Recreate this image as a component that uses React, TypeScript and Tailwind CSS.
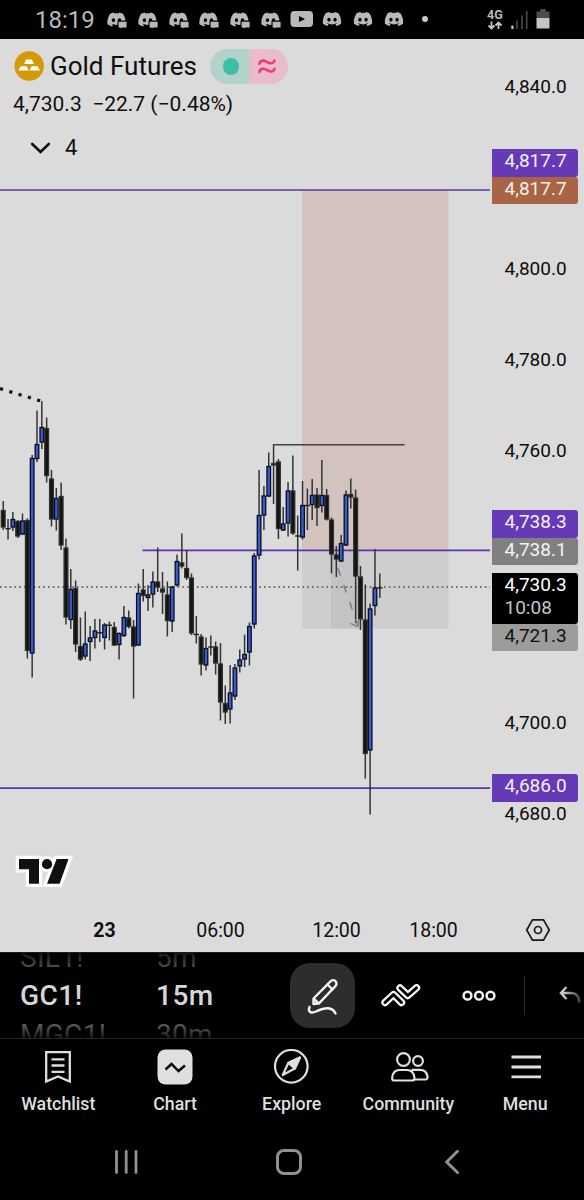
import React from "react";
import { FaDiscord } from "react-icons/fa";

type Candle = [number, number, number, number, "u" | "d"];

// high, body top, body bottom, low, direction
const candles: Candle[] = [
  [501, 510, 527.5, 530, "d"], [519, 528, 529.3, 539.5, "d"], [512, 519, 527.5, 531, "u"],
  [520, 521, 536.5, 538, "d"], [513.5, 520.5, 534.5, 535, "u"], [518.5, 520, 651, 658.5, "d"],
  [455, 458, 653.5, 677.5, "u"], [410.5, 444, 459, 462, "u"], [401, 427, 442.5, 449, "u"],
  [417.5, 428, 476, 482.5, "d"], [470, 478.5, 519.5, 526.5, "d"], [488, 498, 519.5, 530.5, "u"],
  [482.5, 496, 545.5, 550, "d"], [538.5, 547.5, 617.5, 624.5, "d"], [569, 589, 620, 629, "u"],
  [580.5, 588, 644.5, 652, "d"], [617.5, 646, 659.5, 661, "d"], [611.5, 643.5, 656.5, 659.5, "u"],
  [626, 637.5, 642, 661, "u"], [619, 630.5, 638, 648.5, "u"], [619, 632, 633.5, 642, "d"],
  [623, 624.5, 638, 649.5, "u"], [621.5, 624.5, 626, 640.5, "d"], [622, 627, 645.5, 646, "d"],
  [632.5, 633, 645, 659.5, "u"], [606, 617, 636, 637, "u"], [610.5, 617.5, 627, 628.5, "d"],
  [620, 626.5, 646.5, 698.5, "d"], [583.5, 593, 645.5, 646, "u"], [569, 589.5, 596, 601.5, "d"],
  [585, 594.5, 598, 611, "u"], [571.5, 581.5, 594.5, 607.5, "u"], [547.5, 581.5, 587.5, 592, "d"],
  [572, 588.5, 592.5, 614, "d"], [581.5, 594.5, 621, 636.5, "d"], [586, 586.5, 621.5, 632, "u"],
  [554.5, 561, 585.5, 586.5, "u"], [533.5, 562.5, 566.5, 568.5, "d"], [550, 568, 578, 580, "d"],
  [573.5, 577.5, 633.5, 635, "d"], [616, 634, 635, 643.5, "d"], [634, 636.5, 664.5, 675.5, "d"],
  [637.5, 648, 665.5, 670.5, "u"], [635.5, 646.5, 647.5, 655.5, "d"], [641.5, 646.5, 663.5, 674.5, "d"],
  [643, 663.5, 702.5, 720.5, "d"], [685.5, 703, 712.5, 724, "d"], [665, 692.5, 709.5, 723.5, "u"],
  [664, 667.5, 696.5, 700, "u"], [649.5, 659.5, 666.5, 672.5, "u"], [634.5, 654, 659.5, 667, "u"],
  [622.5, 626, 652.5, 665.5, "u"], [553, 555.5, 624.5, 628.5, "u"], [470, 515, 555.5, 559.5, "u"],
  [486, 495.5, 515.5, 530, "u"], [452.5, 466, 496.5, 497, "u"], [444.5, 463, 465.5, 504, "d"],
  [459, 461.5, 529, 539, "d"], [507, 523.5, 530.5, 531, "u"], [482, 490.5, 523.5, 536.5, "u"],
  [455.5, 490.5, 533.5, 535, "d"], [515.5, 535.5, 536.5, 570.5, "d"], [481, 505, 537.5, 539.5, "u"],
  [488.5, 505, 506, 530, "d"], [479, 495, 505, 520, "u"], [488, 494.5, 508, 526, "d"],
  [460, 495, 506, 512.5, "u"], [489, 495, 519.5, 520.5, "d"], [517.5, 519.5, 554.5, 573.5, "d"],
  [546, 554.5, 559.5, 577, "d"], [535, 543, 561.5, 562, "u"], [490.5, 494.5, 545.5, 546, "u"],
  [478.5, 494, 497.5, 508.5, "d"], [489.5, 497.5, 576.5, 623, "d"], [566, 576.5, 619.5, 630, "d"],
  [584.5, 619.5, 754, 778.5, "d"], [603.5, 608.5, 750.5, 814.5, "u"], [549, 587.5, 606, 615.5, "u"],
  [573.5, 587.3, 588.5, 598, "d"],
];

function Chart() {
  return (
    <svg width="491" height="913" viewBox="0 39 491 913" className="block shrink-0">
      <rect x="302" y="190" width="146.5" height="361" fill="#d2c3be" />
      <rect x="302" y="551" width="146.5" height="77.5" fill="#cecece" />
      <rect x="331" y="551" width="29" height="77.5" fill="#c3c3c3" />
      <g stroke="#5c37ab" strokeWidth="1.7">
        <path d="M0 190H490M142.5 550.4H490M0 788.2H490" />
      </g>
      <path d="M0 587H490" stroke="#6d756d" strokeWidth="1.8" strokeDasharray="1.7 3.1" />
      <path d="M273 444.7H404.5" stroke="#45413f" strokeWidth="1.4" />
      <path d="M0 388.6L42 401.4" stroke="#111" strokeWidth="3.2" strokeDasharray="3.2 6.5" />
      {candles.map(([hi, top, bot, lo, dir], i) => {
        const x = 3.2 + i * 4.828;
        const h = bot - top;
        return (
          <g key={i}>
            <path d={`M${x} ${hi}V${lo}`} stroke="#343434" strokeWidth="1.5" />
            {h < 2 ? (
              <path d={`M${x - 2.6} ${(top + bot) / 2}h5.2`} stroke="#1c1c1c" strokeWidth="1.4" />
            ) : dir === "u" ? (
              <rect x={x - 1.8} y={top + 0.5} width="3.6" height={h - 1} fill="#3a5cd0" stroke="#080c20" strokeWidth="1.3" />
            ) : (
              <rect x={x - 1.9} y={top + 0.5} width="3.8" height={h - 1} fill="#121412" stroke="#30322f" strokeWidth="1.3" />
            )}
          </g>
        );
      })}
      <path d="M337.8 568L358 626" stroke="#808080" strokeWidth="1.6" strokeDasharray="8 10" />
      <path d="M350.5 623.3L357.5 626.5L359 619" fill="none" stroke="#808080" strokeWidth="1.4" />
      <g>
        <path d="M19 859H39V883.7H29V869.3H19ZM56.6 859H68.5L59.6 883.7H47Z" fill="#fff" stroke="#fff" strokeWidth="6.4" />
        <circle cx="47" cy="864" r="8" fill="#fff" />
        <path d="M19 859H39V883.7H29V869.3H19ZM56.6 859H68.5L59.6 883.7H47Z" fill="#101010" />
        <circle cx="47" cy="864.2" r="5.1" fill="#101010" />
      </g>
    </svg>
  );
}

function Tick({ children, className }: { children: React.ReactNode; className: string }) {
  return <div className={`flex items-center pb-[2px] pl-[13px] text-[#0c0c0c] ${className}`}>{children}</div>;
}

function Tag({ children, className }: { children: React.ReactNode; className: string }) {
  return (
    <div className={`flex h-[27.5px] w-[86px] items-center rounded-r-[3px] pb-[4.5px] pl-[13px] ${className}`}>{children}</div>
  );
}

function PriceAxis() {
  return (
    <div className="flex w-[93px] flex-col pl-[0.5px] text-[19px] leading-none">
      <Tick className="mt-[34px] h-[28px]">4,840.0</Tick>
      <Tag className="mt-[48px] bg-[#6639b6] text-[#f4f0fa]">4,817.7</Tag>
      <Tag className="bg-[#a96345] text-[#faf0ec]">4,817.7</Tag>
      <Tick className="mt-[51px] h-[28px]">4,800.0</Tick>
      <Tick className="mt-[63px] h-[28px]">4,780.0</Tick>
      <Tick className="mt-[63px] h-[28px]">4,760.0</Tick>
      <Tag className="mt-[45px] bg-[#6639b6] text-[#f4f0fa]">4,738.3</Tag>
      <Tag className="bg-[#808080] text-[#f4f4f4]">4,738.1</Tag>
      <div className="mt-[8px] flex h-[50.5px] w-[86px] flex-col gap-1 rounded-r-[3px] bg-black pt-[2px] pl-[13px] text-white">
        <span>4,730.3</span>
        <span className="text-[#c4c4c4]">10:08</span>
      </div>
      <Tag className="bg-[#9c9c9c] text-[#101010]">4,721.3</Tag>
      <Tick className="mt-[58px] h-[28px]">4,700.0</Tick>
      <Tag className="mt-[37px] bg-[#6639b6] text-[#f4f0fa]">4,686.0</Tag>
      <Tick className="h-[26px]">4,680.0</Tick>
    </div>
  );
}

function DiscordBadge() {
  return (
    <svg width="22" height="20" viewBox="0 0 22 20" className="block">
      <FaDiscord x="0.5" y="-0.5" width="20" height="20" size={20} color="#b9b9b9" />
      <path d="M11.5 10.5H22V20H11.5Z" fill="#000" />
      <path d="M12.6 11.8H20.6V17.4H16.4L14.6 18.4V17.4H12.6Z" fill="#b9b9b9" />
    </svg>
  );
}

function StatusBar() {
  return (
    <header className="flex h-[39px] shrink-0 items-center bg-black text-[#b9b9b9]">
      <span className="ml-[35px] w-[71px] shrink-0 text-[24px] leading-none">18:19</span>
      <div className="flex shrink-0 gap-[8.8px]">
        {[0, 1, 2, 3, 4, 5].map((i) => (
          <DiscordBadge key={i} />
        ))}
      </div>
      <svg width="24" height="16" viewBox="0 0 24 16" className="mb-px ml-[8px] shrink-0">
        <rect x="0.5" width="22.5" height="16" rx="4" fill="#b9b9b9" />
        <path d="M9 5L15 8L9 11Z" fill="#000" />
      </svg>
      <div className="mb-px ml-[8.5px] flex shrink-0 gap-[10.7px]">
        <FaDiscord size={20} />
        <FaDiscord size={20} />
        <FaDiscord size={20} />
      </div>
      <span className="mb-px ml-[18px] size-[6px] shrink-0 rounded-full bg-[#c8c8c8]" />
      <div className="ml-[59px] flex w-[16px] shrink-0 flex-col items-center">
        <span className="text-[12.5px] leading-[12px] font-bold">4G</span>
        <svg width="16" height="9" viewBox="0 0 16 9" fill="none" stroke="#c4c4c4" strokeWidth="1.8">
          <path d="M4.5 0.5V7M1.5 4.5L4.5 7.5L7.5 4.5M11.5 8V2M8.5 4.5L11.5 1.5L14.5 4.5" />
        </svg>
      </div>
      <svg width="18" height="20" viewBox="0 0 18 20" className="ml-[8px] shrink-0">
        <path d="M0.3 15.5H2.5V19H0.3Z" fill="#c4c4c4" />
        <path d="M5.2 10.5H6.8V19H5.2ZM10.2 5.5H11.8V19H10.2ZM14.9 1H16.5V19H14.9Z" fill="#4b4b4b" />
      </svg>
      <svg width="14" height="20" viewBox="0 0 14 20" className="mb-px ml-[7px] shrink-0">
        <path d="M4.2 0H9.8V2.5H13.5V9H0.5V2.5H4.2Z" fill="#4b4b4b" />
        <path d="M0.5 9H13.5V19.5H0.5Z" fill="#c4c4c4" />
      </svg>
    </header>
  );
}

function Legend() {
  return (
    <div className="absolute top-0 left-0 flex flex-col text-[#0f0f0f]">
      <div className="mt-[10px] flex h-[35px] items-center pl-[14px]">
        <svg width="30" height="30" viewBox="0 0 30 30" className="mb-px">
          <circle cx="15.2" cy="15" r="14.7" fill="#d39a06" />
          <path d="M12 8.6H18L19.8 13H10.2ZM6.8 15.2H12.6L14.8 19.4H4.4ZM17.6 15.2H23.6L26 19.4H15.6Z" fill="#fff" />
        </svg>
        <span className="mb-px ml-[6px] w-[160px] text-[26px] leading-none whitespace-nowrap">Gold Futures</span>
        <div className="flex h-[35px] w-[78px] overflow-hidden rounded-full">
          <div className="flex w-[39px] items-center justify-center bg-[#b2d2cc] pl-[3px]">
            <span className="size-[16.5px] rounded-full bg-[#3dbfa6]" />
          </div>
          <div className="flex w-[39px] items-center justify-center bg-[#e8bccb] pr-[4px]">
            <svg width="18" height="15" viewBox="0 0 18 15" fill="none" stroke="#f2396f" strokeWidth="2.6" strokeLinecap="round">
              <path d="M1.4 4.8C2.4 0.8 6 1 9 3S15.6 4.7 16.6 1.7M1.4 13C2.4 9 6 9.2 9 11.2S15.6 12.9 16.6 9.9" />
            </svg>
          </div>
        </div>
      </div>
      <div className="mt-[8px] flex h-[25px] items-center gap-[10.5px] pl-[13px] text-[21px] leading-none whitespace-nowrap">
        <span>4,730.3</span>
        <span>−22.7 (−0.48%)</span>
      </div>
      <div className="mt-[18px] flex h-[26px] items-center pl-[30px] text-[22px] leading-none">
        <svg width="21" height="12" viewBox="0 0 21 12" fill="none" stroke="#0f0f0f" strokeWidth="2.6" strokeLinecap="round">
          <path d="M2.2 2L10.5 10L18.8 2" />
        </svg>
        <span className="ml-[14px]">4</span>
      </div>
    </div>
  );
}

function TimeAxis() {
  return (
    <div className="absolute bottom-0 left-0 flex h-[44px] w-full items-center text-[19.5px] leading-none text-[#0f0f0f]">
      <span className="mt-[2px] ml-[74.5px] w-[60px] text-center font-bold">23</span>
      <span className="mt-[2px] ml-[56px] w-[60px] text-center">06:00</span>
      <span className="mt-[2px] ml-[56px] w-[60px] text-center">12:00</span>
      <span className="mt-[2px] ml-[37px] w-[60px] text-center">18:00</span>
      <svg width="26" height="24" viewBox="0 0 26 24" fill="none" stroke="#1a1a1a" strokeWidth="1.7" className="ml-[61.5px]">
        <path d="M7.5 1.8H18.5L24.3 12L18.5 22.2H7.5L1.7 12Z" />
        <circle cx="13" cy="12" r="3.5" />
      </svg>
    </div>
  );
}

function Wheel({ items, className }: { items: string[]; className: string }) {
  return (
    <div className={`-mt-[14.5px] flex flex-col text-[28px] leading-[38.7px] whitespace-nowrap ${className}`}>
      <span className="tracking-[0.3px] text-[#5c5c5c]">{items[0]}</span>
      <span className="font-medium tracking-[0.5px] text-[#d6d6d6]">{items[1]}</span>
      <span className="tracking-[0.3px] text-[#6c6c6c]">{items[2]}</span>
    </div>
  );
}

function Toolbar() {
  return (
    <div className="flex h-[87px] shrink-0 overflow-hidden border-t border-b border-t-[#1c1c1c] border-b-[#232323] bg-black">
      <div className="relative flex h-[85px] w-[290px] shrink-0 overflow-hidden">
        <Wheel items={["SIL1!", "GC1!", "MGC1!"]} className="w-[136px] pl-[20px]" />
        <Wheel items={["5m", "15m", "30m"]} className="w-[154px] pl-[20px]" />
        <div className="absolute inset-0 bg-linear-to-b from-black/75 to-transparent to-22%" />
        <div className="absolute inset-0 bg-linear-to-b from-transparent from-80% to-black/75" />
      </div>
      <div className="mt-[10px] flex size-[65px] shrink-0 items-center justify-center rounded-[20px] bg-[#2d2d2d]">
        <svg width="34" height="40" viewBox="0 0 34 40" fill="none" stroke="#f4f4f4" strokeWidth="2.4" strokeLinejoin="round" strokeLinecap="round">
          <path d="M7.5 22.5L24.5 5.3C26 3.8 28 3.8 29.4 5.2S30.9 8.7 29.4 10.2L13 27.3L7.5 28Z" />
          <path d="M8 22.8L12.6 27.3M21.5 8.5L26.5 13.5" />
          <path d="M3.5 31C1.5 36.5 5.5 37.5 10 35.5S19 31.5 23.5 32.5S28.5 35.5 29.5 37.5" />
        </svg>
      </div>
      <svg width="40" height="26" viewBox="0 0 40 26" fill="none" stroke="#f4f4f4" className="mt-[31px] ml-[26px] shrink-0">
        <g strokeLinecap="round" strokeLinejoin="round">
          <path d="M4 18.5L12.5 10.6L20.5 18.5M19 4L26.8 11.5L35.5 3.8" strokeWidth="7.4" />
          <path d="M4 18.5L12.5 10.6L20.5 18.5M19 4L26.8 11.5L35.5 3.8" stroke="#000" strokeWidth="2.9" />
        </g>
      </svg>
      <svg width="34" height="12" viewBox="0 0 34 12" fill="none" stroke="#f4f4f4" strokeWidth="2.5" className="mt-[37px] ml-[40.5px] shrink-0">
        <circle cx="5.5" cy="5.7" r="3.9" />
        <circle cx="17" cy="5.7" r="3.9" />
        <circle cx="28.5" cy="5.7" r="3.9" />
      </svg>
      <div className="mt-[23px] ml-[28px] h-[39px] w-px shrink-0 bg-[#2c2c2c]" />
      <svg width="24" height="20" viewBox="0 0 24 20" fill="none" strokeWidth="2.5" className="mt-[32px] ml-[33.5px] shrink-0">
        <defs>
          <linearGradient id="undo" gradientUnits="userSpaceOnUse" x1="6" x2="22" y1="0" y2="0">
            <stop offset="0" stopColor="#c8c8c8" />
            <stop offset="1" stopColor="#444" />
          </linearGradient>
        </defs>
        <path d="M8.5 2L3 8L8.5 14M3 8H13C18.5 8 21.3 11 21.3 17.5" stroke="url(#undo)" />
      </svg>
    </div>
  );
}

function Tab({ label, children }: { label: string; children: React.ReactNode }) {
  return (
    <div className="flex w-[116.7px] flex-col items-center text-[#dfdfdf]">
      <div className="flex h-[54px] items-center justify-center pt-px">{children}</div>
      <span className="text-[17.8px] leading-[22px] font-medium">{label}</span>
    </div>
  );
}

function TabBar() {
  return (
    <nav className="flex h-[86px] shrink-0 bg-black">
      <Tab label="Watchlist">
        <svg width="28" height="34" viewBox="0 0 28 34" fill="none" stroke="#dfdfdf" strokeWidth="2.3">
          <path d="M2.2 2.2H25.8V31.5L14 26.5L2.2 31.5ZM7.5 9.3H20.5M7.5 15.5H20.5M7.5 21.8H20.5" />
        </svg>
      </Tab>
      <Tab label="Chart">
        <svg width="36" height="36" viewBox="0 0 36 36">
          <rect x="0.5" y="0.5" width="35" height="35" rx="8" fill="#dfdfdf" />
          <path d="M8.5 20.5L14.5 15L21.5 22L28 16.5" fill="none" stroke="#0a0a0a" strokeWidth="2.4" />
        </svg>
      </Tab>
      <Tab label="Explore">
        <svg width="36" height="36" viewBox="0 0 36 36" fill="none" stroke="#dfdfdf" strokeWidth="2.2">
          <circle cx="17.3" cy="17.3" r="16.3" />
          <path d="M25.9 8.6L20.8 19.5L8.7 26L14.3 14Z" strokeLinejoin="round" />
          <path d="M25.9 8.6L20.8 19.5L14.3 14Z" fill="#dfdfdf" strokeLinejoin="round" />
        </svg>
      </Tab>
      <Tab label="Community">
        <svg width="40" height="32" viewBox="0 0 40 32" fill="none" stroke="#dfdfdf" strokeWidth="2.2" className="ml-[2px]">
          <circle cx="14.5" cy="8.5" r="6.4" />
          <circle cx="29" cy="10" r="4.9" />
          <path d="M5.5 29.5C3.5 29.5 3 28.5 3.2 26.5C3.8 21.5 6 19 10.5 19H18C22.5 19 24.8 21.5 25.4 26.5C25.6 28.5 25 29.5 23 29.5ZM22.5 18.8H31C35.5 18.8 38 21.5 38.5 25.5C38.7 27.5 38 28.5 36.5 28.5H25.5" />
        </svg>
      </Tab>
      <Tab label="Menu">
        <svg width="30" height="26" viewBox="0 0 30 26" fill="none" stroke="#dfdfdf" strokeWidth="2.8" className="ml-[2px]">
          <path d="M0.5 3H30M0.5 13H30M0.5 22.8H30" />
        </svg>
      </Tab>
    </nav>
  );
}

function SystemNav() {
  return (
    <footer className="flex h-[75px] shrink-0 items-center bg-black pb-[2px]">
      <svg width="26" height="26" viewBox="0 0 26 26" fill="none" stroke="#909090" strokeWidth="2.8" strokeLinecap="round" className="ml-[113px]">
        <path d="M3.5 2.3V23.5M13.2 2.3V23.5M23 2.3V23.5" />
      </svg>
      <svg width="28" height="28" viewBox="0 0 28 28" fill="none" stroke="#909090" strokeWidth="3" className="ml-[136px]">
        <rect x="2.5" y="2.5" width="23" height="23" rx="6.5" />
      </svg>
      <svg width="18" height="26" viewBox="0 0 18 26" fill="none" stroke="#909090" strokeWidth="3" strokeLinecap="round" className="ml-[140px]">
        <path d="M14.5 2.3L3.7 13L14.5 23.5" />
      </svg>
    </footer>
  );
}

export default function App() {
  return (
    <div className="flex h-[1200px] w-[584px] flex-col overflow-hidden bg-black font-['Roboto',sans-serif]">
      <StatusBar />
      <main className="relative flex h-[913px] shrink-0 bg-[#dbdbdb]">
        <Chart />
        <PriceAxis />
        <Legend />
        <TimeAxis />
      </main>
      <Toolbar />
      <TabBar />
      <SystemNav />
    </div>
  );
}
